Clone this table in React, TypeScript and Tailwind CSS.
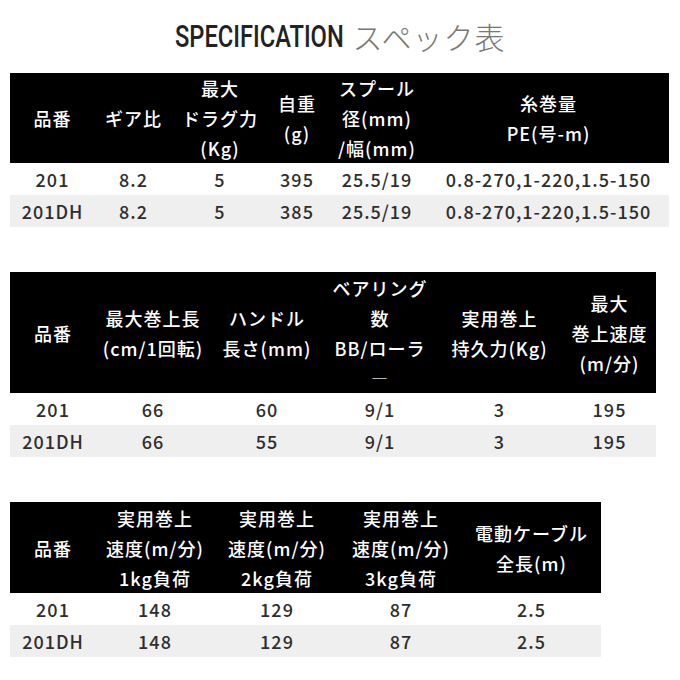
import React from "react";

type Cell = string[];

function Header({ cells, className }: { cells: Cell[]; className: string }) {
  return (
    <div className={className}>
      {cells.map((lines, i) => (
        <div key={i} className="flex flex-col items-center justify-center text-white">
          {lines.map((l, j) =>
            l === "ー" ? (
              <div key={j} className="leading-[30px] whitespace-nowrap font-light text-[#bbbbbb]">
                {l}
              </div>
            ) : (
              <div key={j} className="leading-[30px] whitespace-nowrap">
                {l}
              </div>
            )
          )}
        </div>
      ))}
    </div>
  );
}

function Row({ cells, className }: { cells: string[]; className: string }) {
  return (
    <div className={className}>
      {cells.map((c, i) => (
        <div key={i} className="flex items-center justify-center whitespace-nowrap text-[#2e2e2e]">
          {c}
        </div>
      ))}
    </div>
  );
}

export default function App() {
  return (
    <div className="w-[680px] h-[680px] bg-white font-['Noto_Sans_CJK_JP',sans-serif] text-[18px] tracking-[1px] font-medium">
      <div className="h-[73px] flex items-center justify-center gap-[10px] pb-[2px]">
        <span className="w-[168px] h-[40px] overflow-visible">
          <span className="inline-block origin-left scale-x-[0.74] font-['Roboto',sans-serif] font-medium text-[32px] leading-[40px] tracking-normal text-[#222] whitespace-nowrap">
            SPECIFICATION
          </span>
        </span>
        <span className="font-['Noto_Sans_CJK_JP',sans-serif] font-light text-[30px] leading-[40px] tracking-[1px] text-[#777]">
          スペック表
        </span>
      </div>

      <div className="pl-[10px]">
        <div className="w-[659px]">
          <Header
            className="grid grid-cols-[85px_77px_96px_58px_102px_241px] h-[90px] bg-black"
            cells={[
              ["品番"],
              ["ギア比"],
              ["最大", "ドラグ力", "(Kg)"],
              ["自重", "(g)"],
              ["スプール", "径(mm)", "/幅(mm)"],
              ["糸巻量", "PE(号-m)"],
            ]}
          />
          <Row
            className="grid grid-cols-[85px_77px_96px_58px_102px_241px] h-[32px]"
            cells={["201", "8.2", "5", "395", "25.5/19", "0.8-270,1-220,1.5-150"]}
          />
          <Row
            className="grid grid-cols-[85px_77px_96px_58px_102px_241px] h-[32px] bg-[#efefef]"
            cells={["201DH", "8.2", "5", "385", "25.5/19", "0.8-270,1-220,1.5-150"]}
          />
        </div>

        <div className="w-[646px] mt-[45px]">
          <Header
            className="grid grid-cols-[86px_114px_114px_112px_127px_93px] h-[121px] bg-black"
            cells={[
              ["品番"],
              ["最大巻上長", "(cm/1回転)"],
              ["ハンドル", "長さ(mm)"],
              ["ベアリング", "数", "BB/ローラ", "ー"],
              ["実用巻上", "持久力(Kg)"],
              ["最大", "巻上速度", "(m/分)"],
            ]}
          />
          <Row
            className="grid grid-cols-[86px_114px_114px_112px_127px_93px] h-[32px]"
            cells={["201", "66", "60", "9/1", "3", "195"]}
          />
          <Row
            className="grid grid-cols-[86px_114px_114px_112px_127px_93px] h-[32px] bg-[#efefef]"
            cells={["201DH", "66", "55", "9/1", "3", "195"]}
          />
        </div>

        <div className="w-[591px] mt-[45px]">
          <Header
            className="grid grid-cols-[86px_118px_126px_122px_139px] h-[91px] bg-black"
            cells={[
              ["品番"],
              ["実用巻上", "速度(m/分)", "1kg負荷"],
              ["実用巻上", "速度(m/分)", "2kg負荷"],
              ["実用巻上", "速度(m/分)", "3kg負荷"],
              ["電動ケーブル", "全長(m)"],
            ]}
          />
          <Row
            className="grid grid-cols-[86px_118px_126px_122px_139px] h-[32px]"
            cells={["201", "148", "129", "87", "2.5"]}
          />
          <Row
            className="grid grid-cols-[86px_118px_126px_122px_139px] h-[32px] bg-[#efefef]"
            cells={["201DH", "148", "129", "87", "2.5"]}
          />
        </div>
      </div>
    </div>
  );
}
